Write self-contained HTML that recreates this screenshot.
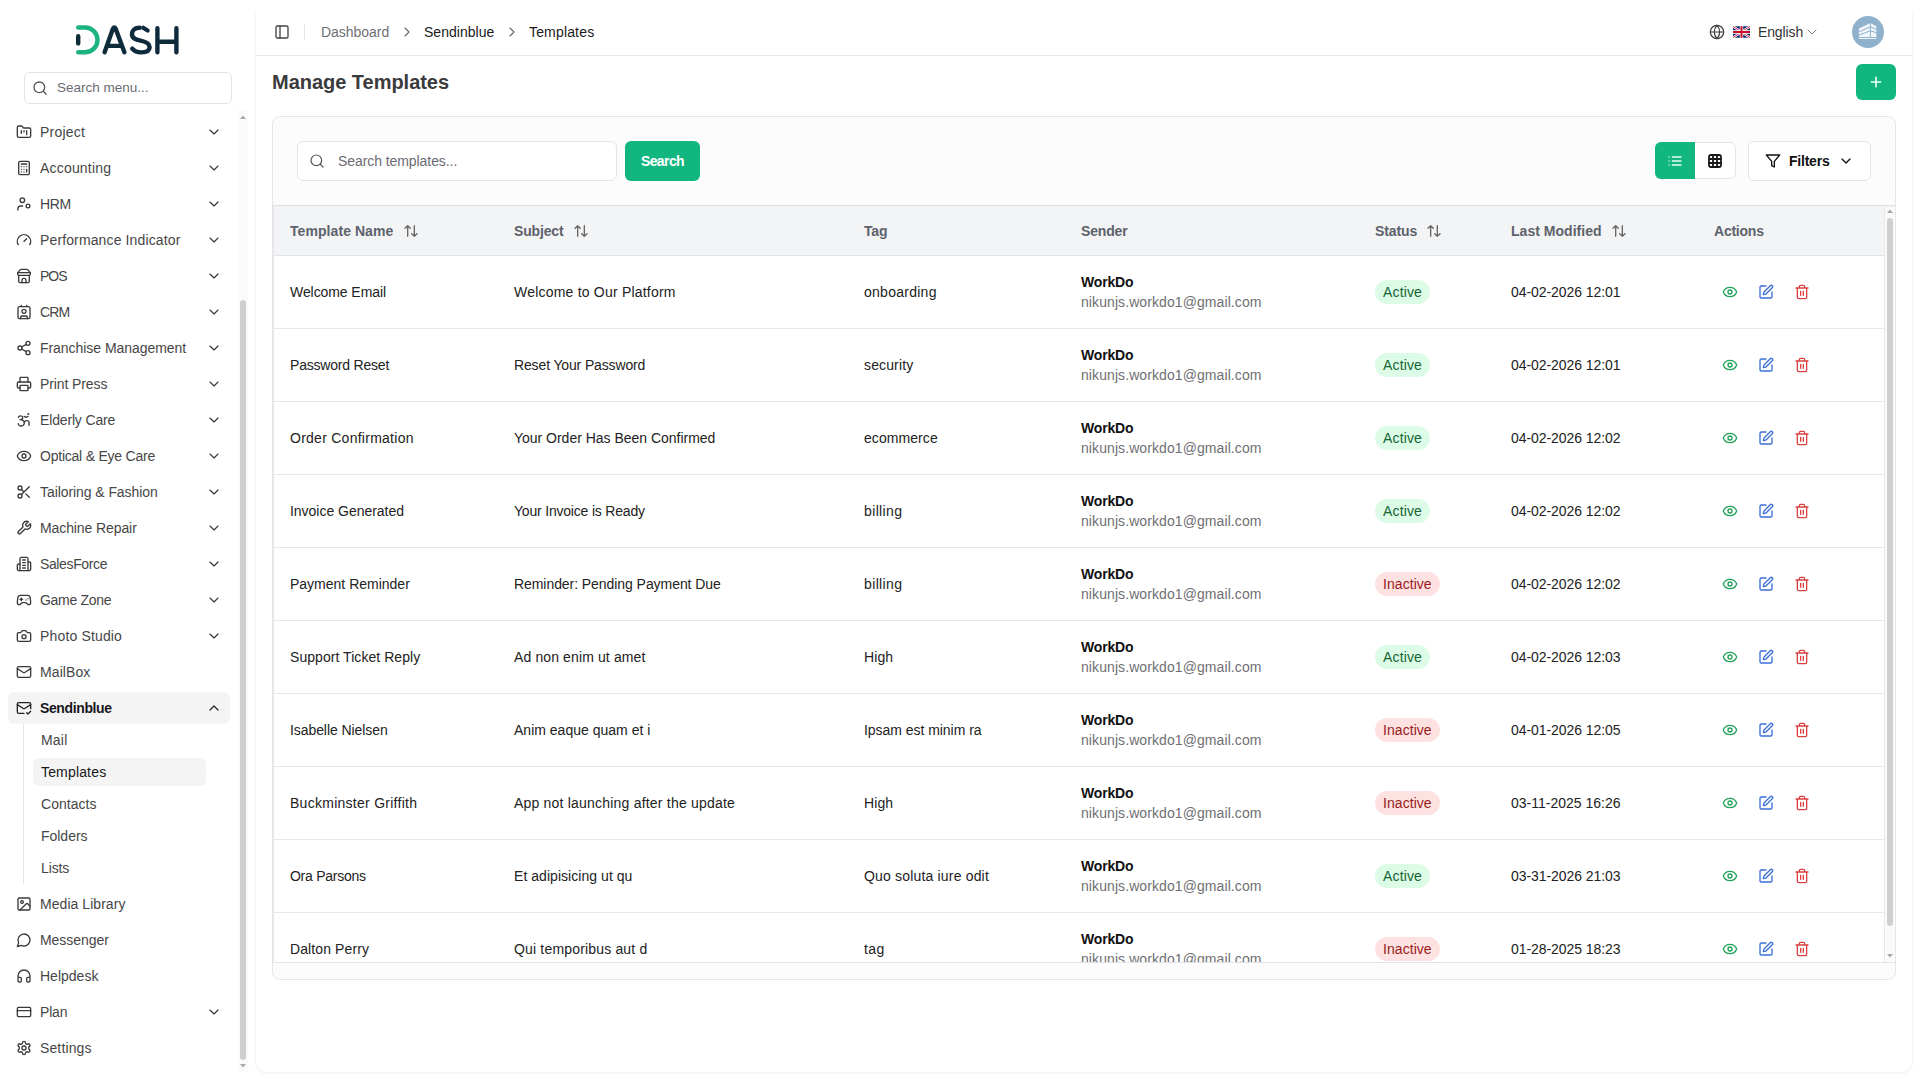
<!DOCTYPE html>
<html><head><meta charset="utf-8">
<style>
*{box-sizing:border-box;margin:0;padding:0}
html,body{width:1920px;height:1080px;overflow:hidden;background:#fff;font-family:"Liberation Sans",sans-serif;font-size:14px;color:#1f2937}
.abs{position:absolute}
svg{display:block}
.ic{position:absolute;width:16px;height:16px;fill:none;stroke:currentColor;stroke-width:2;stroke-linecap:round;stroke-linejoin:round}
/* sidebar */
#sb{position:absolute;left:0;top:0;width:255px;height:1080px;background:#fff}
.mi{position:absolute;left:8px;width:222px;height:32px;color:#464646;}
.mi .ic{left:8px;top:8px;color:#3a3a3a}
.mi .t{position:absolute;left:32px;top:6px;line-height:20px;white-space:nowrap}
.mi .ch{left:198px;top:8px;color:#333;stroke-width:1.6}
.sub{position:absolute;left:33px;width:173px;height:28px;color:#464646}
.sub .t{position:absolute;left:8px;top:4px;line-height:20px}
/* main */
#main{position:absolute;left:255px;top:13px;width:1658px;height:1060px;background:#fff;border:1px solid #f5f5f5;border-top:none;border-radius:0 0 12px 12px;box-shadow:0 1px 2px rgba(0,0,0,.04)}
.row{position:absolute;left:273px;width:1611px;height:73px;border-bottom:1px solid #e8e8ea;background:#fff}
.c{position:absolute;line-height:20px;white-space:nowrap;color:#222}
.badge{position:absolute;height:24px;border-radius:12px;line-height:24px;padding:0 8px;font-size:14px}
.act{background:#dcfce7;color:#166534}
.ina{background:#fee2e2;color:#991b1b}
.hd{position:absolute;top:221px;line-height:20px;font-weight:700;color:#5d626b;white-space:nowrap}
.srt{position:absolute;top:223px;width:16px;height:16px;fill:none;stroke:#666;stroke-width:2;stroke-linecap:round;stroke-linejoin:round}
</style></head><body>

<!-- SIDEBAR -->
<div id="sb">
  <svg class="abs" style="left:70px;top:20px" width="115" height="40" viewBox="70 20 115 40">
    <path d="M78.2 27.5 H85.1 A12.4 12.4 0 0 1 85.1 52.3 H78.2" fill="none" stroke="#1cb37e" stroke-width="4.4" stroke-linecap="round"></path>
    <path d="M78.2 36.2 V43.4" fill="none" stroke="#0e2b3c" stroke-width="4.4" stroke-linecap="round"></path>
    <path d="M104.6 52.3 L113 28.6 Q114.3 26.5 115.6 28.6 L124.4 52.3 M108.6 45.9 H120.4" fill="none" stroke="#0e2b3c" stroke-width="4.4" stroke-linecap="round" stroke-linejoin="round"></path>
    <path d="M143.2 27.8 L147.6 30.6" fill="none" stroke="#0e2b3c" stroke-width="4.2" stroke-linecap="round"></path>
    <path d="M139.6 27.8 C134.6 27.8 132 30.6 132 34.2 C132 38.4 135.6 39.6 140.6 40.6 C146 41.7 149.6 43.2 149.6 47.3 C149.6 50.8 146.4 52.4 141.2 52.4 C137.2 52.4 134.2 51 132.2 48.6" fill="none" stroke="#0e2b3c" stroke-width="4.4" stroke-linecap="round"></path>
    <path d="M157.4 28.2 V52.3 M176.4 28.2 V52.3 M157.4 41.8 H176.4" fill="none" stroke="#0e2b3c" stroke-width="4.4" stroke-linecap="round"></path>
  </svg>
  <div class="abs" style="left:24px;top:72px;width:208px;height:32px;border:1px solid #e4e4e7;border-radius:6px;background:#fff"></div>
  <svg class="ic" style="left:32px;top:80px;color:#555;stroke-width:2" viewBox="0 0 24 24"><circle cx="11" cy="11" r="8"></circle><path d="m21 21-4.3-4.3"></path></svg>
  <div class="abs u14" style="left: 57px; top: 78px; line-height: 20px; font-size: 13.5px; color: rgb(107, 107, 115); letter-spacing: -0.01px;">Search menu...</div>
  <!-- scrollbar -->
  <div class="abs" style="left:238px;top:110px;width:10px;height:962px;background:#fafafa"></div>
  <div class="abs" style="left:240px;top:300px;width:6px;height:760px;background:#cfcfd2;border-radius:3px"></div>
  <svg class="abs" style="left:239px;top:114px" width="8" height="6"><path d="M1 5 L4 1.5 L7 5Z" fill="#a8a8a8"></path></svg>
  <svg class="abs" style="left:239px;top:1063px" width="8" height="6"><path d="M1 1 L4 4.5 L7 1Z" fill="#a8a8a8"></path></svg>

  <div class="mi" style="top:116px"><svg class="ic" style="" viewBox="0 0 24 24"><path d="M4 20h16a2 2 0 0 0 2-2V8a2 2 0 0 0-2-2h-7.93a2 2 0 0 1-1.66-.9l-.82-1.2A2 2 0 0 0 7.93 3H4a2 2 0 0 0-2 2v13c0 1.1.9 2 2 2Z"></path><path d="M8 10v4M12 10v2M16 10v6"></path></svg><div class="t" style="letter-spacing: 0.203px;">Project</div><svg class="ic ch" viewBox="0 0 24 24"><path d="m6 9 6 6 6-6"></path></svg></div>
<div class="mi" style="top:152px"><svg class="ic" style="" viewBox="0 0 24 24"><rect width="16" height="20" x="4" y="2" rx="2"></rect><path d="M8 6h8M16 14v4M16 10h.01M12 10h.01M8 10h.01M12 14h.01M8 14h.01M12 18h.01M8 18h.01"></path></svg><div class="t" style="letter-spacing: 0.188px;">Accounting</div><svg class="ic ch" viewBox="0 0 24 24"><path d="m6 9 6 6 6-6"></path></svg></div>
<div class="mi" style="top:188px"><svg class="ic" style="" viewBox="0 0 24 24"><circle cx="9.5" cy="6.3" r="3.4"></circle><path d="M2.8 21v-1.5a4.5 4.5 0 0 1 4.5-4.5h2.5"></path><circle cx="18" cy="15" r="2.8"></circle></svg><div class="t" style="letter-spacing: -0.406px;">HRM</div><svg class="ic ch" viewBox="0 0 24 24"><path d="m6 9 6 6 6-6"></path></svg></div>
<div class="mi" style="top:224px"><svg class="ic" style="" viewBox="0 0 24 24"><path d="m12 14 4-4"></path><path d="M3.34 19a10 10 0 1 1 17.32 0"></path></svg><div class="t" style="letter-spacing: 0.128px;">Performance Indicator</div><svg class="ic ch" viewBox="0 0 24 24"><path d="m6 9 6 6 6-6"></path></svg></div>
<div class="mi" style="top:260px"><svg class="ic" style="" viewBox="0 0 24 24"><path d="M7 2h10l4.5 5h-19z"></path><path d="M2.5 7v2.3A1.7 1.7 0 0 0 4.2 11h15.6a1.7 1.7 0 0 0 1.7-1.7V7"></path><path d="M4 11v9a2 2 0 0 0 2 2h12a2 2 0 0 0 2-2v-9"></path><path d="M9 22v-3.5a3 3 0 0 1 6 0V22"></path></svg><div class="t" style="letter-spacing: -1px;">POS</div><svg class="ic ch" viewBox="0 0 24 24"><path d="m6 9 6 6 6-6"></path></svg></div>
<div class="mi" style="top:296px"><svg class="ic" style="" viewBox="0 0 24 24"><path d="M16 2v2M8 2v2"></path><rect width="18" height="18" x="3" y="4" rx="2"></rect><circle cx="12" cy="11" r="3"></circle><path d="M7 22v-2a2 2 0 0 1 2-2h6a2 2 0 0 1 2 2v2"></path></svg><div class="t" style="letter-spacing: -0.802px;">CRM</div><svg class="ic ch" viewBox="0 0 24 24"><path d="m6 9 6 6 6-6"></path></svg></div>
<div class="mi" style="top:332px"><svg class="ic" style="" viewBox="0 0 24 24"><circle cx="18" cy="5" r="3"></circle><circle cx="6" cy="12" r="3"></circle><circle cx="18" cy="19" r="3"></circle><path d="m8.59 13.51 6.83 3.98M15.41 6.51l-6.82 3.98"></path></svg><div class="t" style="letter-spacing: -0.045px;">Franchise Management</div><svg class="ic ch" viewBox="0 0 24 24"><path d="m6 9 6 6 6-6"></path></svg></div>
<div class="mi" style="top:368px"><svg class="ic" style="" viewBox="0 0 24 24"><path d="M6 18H4a2 2 0 0 1-2-2v-5a2 2 0 0 1 2-2h16a2 2 0 0 1 2 2v5a2 2 0 0 1-2 2h-2"></path><path d="M6 9V3a1 1 0 0 1 1-1h10a1 1 0 0 1 1 1v6"></path><rect x="6" y="14" width="12" height="8" rx="1"></rect></svg><div class="t" style="letter-spacing: -0.104px;">Print Press</div><svg class="ic ch" viewBox="0 0 24 24"><path d="m6 9 6 6 6-6"></path></svg></div>
<div class="mi" style="top:404px"><svg class="ic" style="" viewBox="0 0 24 24"><path d="M3.5 8C4.5 5 10 5 10 8.5C10 11 7.5 11.5 6 11.5C10 11.5 12.5 13.5 12.5 16.5C12.5 20 9 21.5 6 20.8C4.2 20.3 3.2 19.2 3.5 17.5"></path><path d="M12.5 15.5C13.5 12.5 19.5 12 19.5 15.5V20"></path><path d="M12 6.5Q15 9.2 18 6.5"></path><circle cx="18.5" cy="3" r=".6"></circle></svg><div class="t" style="letter-spacing: -0.155px;">Elderly Care</div><svg class="ic ch" viewBox="0 0 24 24"><path d="m6 9 6 6 6-6"></path></svg></div>
<div class="mi" style="top:440px"><svg class="ic" style="" viewBox="0 0 24 24"><path d="M2.062 12.348a1 1 0 0 1 0-.696 10.75 10.75 0 0 1 19.876 0 1 1 0 0 1 0 .696 10.75 10.75 0 0 1-19.876 0"></path><circle cx="12" cy="12" r="3"></circle></svg><div class="t" style="letter-spacing: -0.225px;">Optical &amp; Eye Care</div><svg class="ic ch" viewBox="0 0 24 24"><path d="m6 9 6 6 6-6"></path></svg></div>
<div class="mi" style="top:476px"><svg class="ic" style="" viewBox="0 0 24 24"><circle cx="6" cy="6" r="3"></circle><path d="M8.12 8.12 12 12M20 4 8.12 15.88"></path><circle cx="6" cy="18" r="3"></circle><path d="M14.8 14.8 20 20"></path></svg><div class="t" style="letter-spacing: -0.072px;">Tailoring &amp; Fashion</div><svg class="ic ch" viewBox="0 0 24 24"><path d="m6 9 6 6 6-6"></path></svg></div>
<div class="mi" style="top:512px"><svg class="ic" style="" viewBox="0 0 24 24"><path d="M14.7 6.3a1 1 0 0 0 0 1.4l1.6 1.6a1 1 0 0 0 1.4 0l3.77-3.77a6 6 0 0 1-7.94 7.94l-6.91 6.91a2.12 2.12 0 0 1-3-3l6.91-6.91a6 6 0 0 1 7.94-7.94l-3.76 3.76z"></path></svg><div class="t" style="letter-spacing: -0.096px;">Machine Repair</div><svg class="ic ch" viewBox="0 0 24 24"><path d="m6 9 6 6 6-6"></path></svg></div>
<div class="mi" style="top:548px"><svg class="ic" style="" viewBox="0 0 24 24"><path d="M6 22V4a2 2 0 0 1 2-2h8a2 2 0 0 1 2 2v18Z"></path><path d="M6 12H4a2 2 0 0 0-2 2v6a2 2 0 0 0 2 2h2M18 9h2a2 2 0 0 1 2 2v9a2 2 0 0 1-2 2h-2M10 6h4M10 10h4M10 14h4M10 18h4"></path></svg><div class="t" style="letter-spacing: -0.377px;">SalesForce</div><svg class="ic ch" viewBox="0 0 24 24"><path d="m6 9 6 6 6-6"></path></svg></div>
<div class="mi" style="top:584px"><svg class="ic" style="" viewBox="0 0 24 24"><path d="M6 11h4M8 9v4M15 12h.01M18 10h.01"></path><path d="M17.32 5H6.68a4 4 0 0 0-3.978 3.59c-.006.052-.01.101-.017.152C2.604 9.416 2 14.456 2 16a3 3 0 0 0 3 3c1 0 1.5-.5 2-1l1.414-1.414A2 2 0 0 1 9.828 16h4.344a2 2 0 0 1 1.414.586L17 18c.5.5 1 1 2 1a3 3 0 0 0 3-3c0-1.545-.604-6.584-.685-7.258-.007-.05-.011-.1-.017-.151A4 4 0 0 0 17.32 5z"></path></svg><div class="t" style="letter-spacing: -0.302px;">Game Zone</div><svg class="ic ch" viewBox="0 0 24 24"><path d="m6 9 6 6 6-6"></path></svg></div>
<div class="mi" style="top:620px"><svg class="ic" style="" viewBox="0 0 24 24"><path d="M14.5 4h-5L7 7H4a2 2 0 0 0-2 2v9a2 2 0 0 0 2 2h16a2 2 0 0 0 2-2V9a2 2 0 0 0-2-2h-3l-2.5-3z"></path><circle cx="12" cy="13" r="3"></circle></svg><div class="t" style="letter-spacing: 0.156px;">Photo Studio</div><svg class="ic ch" viewBox="0 0 24 24"><path d="m6 9 6 6 6-6"></path></svg></div>
<div class="mi" style="top:656px"><svg class="ic" style="" viewBox="0 0 24 24"><rect width="20" height="16" x="2" y="4" rx="2"></rect><path d="m22 7-8.97 5.7a1.94 1.94 0 0 1-2.06 0L2 7"></path></svg><div class="t" style="letter-spacing: 0.094px;">MailBox</div></div>
<div class="mi act-mi" style="top:692px;background:#f4f4f5;border-radius:6px;color:#18181b"><svg class="ic" style="color:#222" viewBox="0 0 24 24"><path d="M22 13V6a2 2 0 0 0-2-2H4a2 2 0 0 0-2 2v12c0 1.1.9 2 2 2h8"></path><path d="m22 7-8.97 5.7a1.94 1.94 0 0 1-2.06 0L2 7"></path><path d="m16 19 2 2 4-4"></path></svg><div class="t med" style="font-weight: 700; letter-spacing: -0.38px;">Sendinblue</div><svg class="ic ch" viewBox="0 0 24 24" style="color:#222;stroke-width:1.8"><path d="m18 15-6-6-6 6"></path></svg></div>
<div class="abs" style="left:23px;top:724px;width:1px;height:160px;background:#e4e4e7"></div>
<div class="sub" style="top:726px"><div class="t" style="letter-spacing: 0.191px;">Mail</div></div>
<div class="sub" style="top:758px;background:#f4f4f5;border-radius:6px;color:#18181b"><div class="t" style="letter-spacing: 0.165px;">Templates</div></div>
<div class="sub" style="top:790px"><div class="t" style="letter-spacing: 0.033px;">Contacts</div></div>
<div class="sub" style="top:822px"><div class="t" style="letter-spacing: -0.025px;">Folders</div></div>
<div class="sub" style="top:854px"><div class="t" style="letter-spacing: -0.122px;">Lists</div></div>
<div class="mi" style="top:888px"><svg class="ic" style="" viewBox="0 0 24 24"><rect width="18" height="18" x="3" y="3" rx="2"></rect><circle cx="9" cy="9" r="2"></circle><path d="m21 15-3.086-3.086a2 2 0 0 0-2.828 0L6 21"></path></svg><div class="t" style="letter-spacing: 0.049px;">Media Library</div></div>
<div class="mi" style="top:924px"><svg class="ic" style="" viewBox="0 0 24 24"><path d="M7.9 20A9 9 0 1 0 4 16.1L2 22Z"></path></svg><div class="t" style="letter-spacing: -0.045px;">Messenger</div></div>
<div class="mi" style="top:960px"><svg class="ic" style="" viewBox="0 0 24 24"><path d="M3 14h3a2 2 0 0 1 2 2v3a2 2 0 0 1-2 2H5a2 2 0 0 1-2-2v-7a9 9 0 0 1 18 0v7a2 2 0 0 1-2 2h-1a2 2 0 0 1-2-2v-3a2 2 0 0 1 2-2h3"></path></svg><div class="t" style="letter-spacing: 0.006px;">Helpdesk</div></div>
<div class="mi" style="top:996px"><svg class="ic" style="" viewBox="0 0 24 24"><rect width="20" height="14" x="2" y="5" rx="2"></rect><path d="M2 10h20"></path></svg><div class="t" style="letter-spacing: -0.191px;">Plan</div><svg class="ic ch" viewBox="0 0 24 24"><path d="m6 9 6 6 6-6"></path></svg></div>
<div class="mi" style="top:1032px"><svg class="ic" style="" viewBox="0 0 24 24"><path d="M12.22 2h-.44a2 2 0 0 0-2 2v.18a2 2 0 0 1-1 1.73l-.43.25a2 2 0 0 1-2 0l-.15-.08a2 2 0 0 0-2.73.73l-.22.38a2 2 0 0 0 .73 2.73l.15.1a2 2 0 0 1 1 1.72v.51a2 2 0 0 1-1 1.74l-.15.09a2 2 0 0 0-.73 2.73l.22.38a2 2 0 0 0 2.73.73l.15-.08a2 2 0 0 1 2 0l.43.25a2 2 0 0 1 1 1.73V20a2 2 0 0 0 2 2h.44a2 2 0 0 0 2-2v-.18a2 2 0 0 1 1-1.73l.43-.25a2 2 0 0 1 2 0l.15.08a2 2 0 0 0 2.73-.73l.22-.39a2 2 0 0 0-.73-2.73l-.15-.08a2 2 0 0 1-1-1.74v-.5a2 2 0 0 1 1-1.74l.15-.09a2 2 0 0 0 .73-2.73l-.22-.38a2 2 0 0 0-2.73-.73l-.15.08a2 2 0 0 1-2 0l-.43-.25a2 2 0 0 1-1-1.73V4a2 2 0 0 0-2-2z"></path><circle cx="12" cy="12" r="3"></circle></svg><div class="t" style="letter-spacing: 0.125px;">Settings</div></div>
</div>

<!-- MAIN PANEL -->
<div id="main"></div>
<div class="abs" style="left:256px;top:55px;width:1656px;height:1px;background:#e6e6e6"></div>

<!-- header -->
<svg class="ic" style="left:274px;top:24px;color:#444" viewBox="0 0 24 24"><rect width="18" height="18" x="3" y="3" rx="2"></rect><path d="M9 3v18"></path></svg>
<div class="abs" style="left:304px;top:24px;width:1px;height:16px;background:#e2e2e2"></div>
<div class="abs" style="left: 321px; top: 22px; line-height: 20px; color: rgb(112, 112, 117); letter-spacing: -0.031px;">Dashboard</div>
<svg class="ic" style="left:399px;top:24px;color:#666;stroke-width:1.6" viewBox="0 0 24 24"><path d="m9 18 6-6-6-6"></path></svg>
<div class="abs" style="left: 424px; top: 22px; line-height: 20px; color: rgb(26, 26, 26); letter-spacing: 0.017px;">Sendinblue</div>
<svg class="ic" style="left:504px;top:24px;color:#666;stroke-width:1.6" viewBox="0 0 24 24"><path d="m9 18 6-6-6-6"></path></svg>
<div class="abs" style="left: 529px; top: 22px; line-height: 20px; color: rgb(26, 26, 26); letter-spacing: 0.165px;">Templates</div>

<svg class="ic" style="left:1709px;top:24px;color:#3a3a3a;stroke-width:1.8" viewBox="0 0 24 24"><circle cx="12" cy="12" r="10"></circle><path d="M12 2a14.5 14.5 0 0 0 0 20 14.5 14.5 0 0 0 0-20"></path><path d="M2 12h20"></path></svg>
<svg class="abs" style="left:1733px;top:26px" width="17" height="12" viewBox="0 0 60 40">
  <rect width="60" height="40" fill="#012169"></rect>
  <path d="M0 0L60 40M60 0L0 40" stroke="#fff" stroke-width="8"></path>
  <path d="M0 0L60 40M60 0L0 40" stroke="#C8102E" stroke-width="3"></path>
  <path d="M30 0V40M0 20H60" stroke="#fff" stroke-width="12"></path>
  <path d="M30 0V40M0 20H60" stroke="#C8102E" stroke-width="7"></path>
</svg>
<div class="abs" style="left: 1758px; top: 22px; line-height: 20px; color: rgb(51, 51, 51); letter-spacing: -0.125px;">English</div>
<svg class="ic" style="left:1804px;top:24px;color:#888;stroke-width:1.5" viewBox="0 0 24 24"><path d="m6 9 6 6 6-6"></path></svg>
<div class="abs" style="left:1852px;top:16px;width:32px;height:32px;border-radius:50%;background:#8fb1cc;overflow:hidden">
  <svg width="32" height="32" viewBox="0 0 32 32"><path d="M6.9 12.5 L18.4 7 L24.3 10.3 V22.9 H6.9Z" fill="#f2f6fa"></path><path d="M6.9 15.8 L18.4 10.8 L24.3 13.4 M6.9 19 L18.4 14.8 L24.3 16.6 M6.9 21.6 H24.3 M18.4 7 V21.6" stroke="#8fb1cc" stroke-width="1" fill="none"></path></svg>
</div>

<!-- title -->
<div class="abs" style="left: 272px; top: 70px; line-height: 24px; font-size: 20px; font-weight: 700; color: rgb(59, 59, 61); letter-spacing: -0.025px;">Manage Templates</div>
<div class="abs" style="left:1856px;top:64px;width:40px;height:36px;background:#12b77f;border-radius:6px"></div>
<svg class="ic" style="left:1868px;top:74px;color:#f0fff8;stroke-width:2.4" viewBox="0 0 24 24"><path d="M5 12h14"></path><path d="M12 5v14"></path></svg>

<!-- table container -->
<div class="abs" style="left:272px;top:116px;width:1624px;height:864px;border:1px solid #e6e6e8;border-radius:8px;background:#fcfcfc"></div>
<div class="abs" style="left:297px;top:141px;width:320px;height:40px;border:1px solid #e4e4e7;border-radius:6px;background:#fff"></div>
<svg class="ic" style="left:309px;top:153px;color:#555;stroke-width:1.8" viewBox="0 0 24 24"><circle cx="11" cy="11" r="8"></circle><path d="m21 21-4.3-4.3"></path></svg>
<div class="abs" style="left: 338px; top: 151px; line-height: 20px; color: rgb(107, 107, 115); letter-spacing: -0.072px;">Search templates...</div>
<div class="abs med" style="left: 625px; top: 141px; width: 75px; height: 40px; background: rgb(18, 183, 127); border-radius: 6px; color: rgb(255, 255, 255); font-weight: 700; text-align: center; line-height: 40px; letter-spacing: -0.609px;">Search</div>

<div class="abs" style="left:1655px;top:142px;width:81px;height:37px;border:1px solid #e4e4e7;border-radius:6px;background:#fff"></div>
<div class="abs" style="left:1655px;top:142px;width:40px;height:37px;background:#12b77f;border-radius:6px 0 0 6px"></div>
<svg class="ic" style="left:1667px;top:153px;color:#e6fff4;stroke-width:2" viewBox="0 0 24 24"><path d="M3 6h.01M3 12h.01M3 18h.01M8 6h13M8 12h13M8 18h13"></path></svg>
<svg class="ic" style="left:1707px;top:153px;color:#1a1a1a;stroke-width:2.7" viewBox="0 0 24 24"><rect width="18" height="18" x="3" y="3" rx="3"></rect><path d="M3 9h18M3 15h18M9 3v18M15 3v18"></path></svg>

<div class="abs" style="left:1748px;top:141px;width:123px;height:40px;border:1px solid #e4e4e7;border-radius:6px;background:#fff"></div>
<svg class="ic" style="left:1765px;top:153px;color:#111;stroke-width:2" viewBox="0 0 24 24"><path d="M22 3H2l8 9.46V19l4 2v-8.54L22 3z"></path></svg>
<div class="abs med" style="left: 1789px; top: 151px; line-height: 20px; font-weight: 700; color: rgb(17, 17, 17); letter-spacing: -0.225px;">Filters</div>
<svg class="ic" style="left:1838px;top:153px;color:#111;stroke-width:2" viewBox="0 0 24 24"><path d="m6 9 6 6 6-6"></path></svg>

<!-- table -->
<div class="abs" style="left:273px;top:205px;width:1622px;height:1px;background:#e1e1e3"></div><div class="abs" style="left:273px;top:206px;width:1622px;height:1px;background:#f0f0f1"></div>
<div id="tbl" class="abs" style="left:0;top:0;width:1920px;height:962px;overflow:hidden">
  <div class="abs" style="left:273px;top:207px;width:1611px;height:49px;background:#f3f4f6;border-bottom:1px solid #e3e4e7"></div>
  <div class="hd" style="left: 290px; letter-spacing: 0.07px;">Template Name</div>
<svg class="srt" style="left:403px" viewBox="0 0 24 24"><path d="m21 16-4 4-4-4M17 20V4M3 8l4-4 4 4M7 4v16"></path></svg>
<div class="hd" style="left: 514px; letter-spacing: -0.167px;">Subject</div>
<svg class="srt" style="left:573px" viewBox="0 0 24 24"><path d="m21 16-4 4-4-4M17 20V4M3 8l4-4 4 4M7 4v16"></path></svg>
<div class="hd" style="left: 864px; letter-spacing: -0.177px;">Tag</div>
<div class="hd" style="left: 1081px; letter-spacing: -0.174px;">Sender</div>
<div class="hd" style="left: 1375px; letter-spacing: -0.099px;">Status</div>
<svg class="srt" style="left:1426px" viewBox="0 0 24 24"><path d="m21 16-4 4-4-4M17 20V4M3 8l4-4 4 4M7 4v16"></path></svg>
<div class="hd" style="left: 1511px; letter-spacing: 0.031px;">Last Modified</div>
<svg class="srt" style="left:1611px" viewBox="0 0 24 24"><path d="m21 16-4 4-4-4M17 20V4M3 8l4-4 4 4M7 4v16"></path></svg>
<div class="hd" style="left: 1714px; letter-spacing: -0.228px;">Actions</div>
<div class="row" style="top:256px"></div><div class="c" style="left: 290px; top: 282px; letter-spacing: -0.076px;">Welcome Email</div><div class="c" style="left: 514px; top: 282px; letter-spacing: 0.209px;">Welcome to Our Platform</div><div class="c" style="left: 864px; top: 282px; letter-spacing: 0.264px;">onboarding</div><div class="c med" style="left: 1081px; top: 272px; font-weight: 700; color: rgb(17, 17, 17); letter-spacing: -0.19px;">WorkDo</div><div class="c" style="left: 1081px; top: 292px; color: rgb(111, 111, 115); letter-spacing: 0.086px;">nikunjs.workdo1@gmail.com</div><div class="badge act" style="left: 1375px; top: 280px; letter-spacing: 0.148px;">Active</div><div class="c" style="left: 1511px; top: 282px; letter-spacing: -0.065px;">04-02-2026 12:01</div><svg class="ic" style="left:1722px;top:284px;color:#22a05a;stroke-width:2" viewBox="0 0 24 24"><path d="M2.062 12.348a1 1 0 0 1 0-.696 10.75 10.75 0 0 1 19.876 0 1 1 0 0 1 0 .696 10.75 10.75 0 0 1-19.876 0"></path><circle cx="12" cy="12" r="3"></circle></svg><svg class="ic" style="left:1758px;top:284px;color:#3a6fd8;stroke-width:2" viewBox="0 0 24 24"><path d="M12 3H5a2 2 0 0 0-2 2v14a2 2 0 0 0 2 2h14a2 2 0 0 0 2-2v-7"></path><path d="M18.375 2.625a1 1 0 0 1 3 3l-9.013 9.014a2 2 0 0 1-.853.505l-2.873.84a.5.5 0 0 1-.62-.62l.84-2.873a2 2 0 0 1 .506-.852z"></path></svg><svg class="ic" style="left:1794px;top:284px;color:#dc4040;stroke-width:2" viewBox="0 0 24 24"><path d="M3 6h18M19 6v14c0 1-1 2-2 2H7c-1 0-2-1-2-2V6M8 6V4c0-1 1-2 2-2h4c1 0 2 1 2 2v2M10 11v6M14 11v6"></path></svg>
<div class="row" style="top:329px"></div><div class="c" style="left: 290px; top: 355px; letter-spacing: -0.205px;">Password Reset</div><div class="c" style="left: 514px; top: 355px; letter-spacing: -0.137px;">Reset Your Password</div><div class="c" style="left: 864px; top: 355px; letter-spacing: 0.131px;">security</div><div class="c med" style="left: 1081px; top: 345px; font-weight: 700; color: rgb(17, 17, 17); letter-spacing: -0.19px;">WorkDo</div><div class="c" style="left: 1081px; top: 365px; color: rgb(111, 111, 115); letter-spacing: 0.086px;">nikunjs.workdo1@gmail.com</div><div class="badge act" style="left: 1375px; top: 353px; letter-spacing: 0.148px;">Active</div><div class="c" style="left: 1511px; top: 355px; letter-spacing: -0.065px;">04-02-2026 12:01</div><svg class="ic" style="left:1722px;top:357px;color:#22a05a;stroke-width:2" viewBox="0 0 24 24"><path d="M2.062 12.348a1 1 0 0 1 0-.696 10.75 10.75 0 0 1 19.876 0 1 1 0 0 1 0 .696 10.75 10.75 0 0 1-19.876 0"></path><circle cx="12" cy="12" r="3"></circle></svg><svg class="ic" style="left:1758px;top:357px;color:#3a6fd8;stroke-width:2" viewBox="0 0 24 24"><path d="M12 3H5a2 2 0 0 0-2 2v14a2 2 0 0 0 2 2h14a2 2 0 0 0 2-2v-7"></path><path d="M18.375 2.625a1 1 0 0 1 3 3l-9.013 9.014a2 2 0 0 1-.853.505l-2.873.84a.5.5 0 0 1-.62-.62l.84-2.873a2 2 0 0 1 .506-.852z"></path></svg><svg class="ic" style="left:1794px;top:357px;color:#dc4040;stroke-width:2" viewBox="0 0 24 24"><path d="M3 6h18M19 6v14c0 1-1 2-2 2H7c-1 0-2-1-2-2V6M8 6V4c0-1 1-2 2-2h4c1 0 2 1 2 2v2M10 11v6M14 11v6"></path></svg>
<div class="row" style="top:402px"></div><div class="c" style="left: 290px; top: 428px; letter-spacing: 0.261px;">Order Confirmation</div><div class="c" style="left: 514px; top: 428px; letter-spacing: -0.016px;">Your Order Has Been Confirmed</div><div class="c" style="left: 864px; top: 428px; letter-spacing: 0.071px;">ecommerce</div><div class="c med" style="left: 1081px; top: 418px; font-weight: 700; color: rgb(17, 17, 17); letter-spacing: -0.19px;">WorkDo</div><div class="c" style="left: 1081px; top: 438px; color: rgb(111, 111, 115); letter-spacing: 0.086px;">nikunjs.workdo1@gmail.com</div><div class="badge act" style="left: 1375px; top: 426px; letter-spacing: 0.148px;">Active</div><div class="c" style="left: 1511px; top: 428px; letter-spacing: -0.065px;">04-02-2026 12:02</div><svg class="ic" style="left:1722px;top:430px;color:#22a05a;stroke-width:2" viewBox="0 0 24 24"><path d="M2.062 12.348a1 1 0 0 1 0-.696 10.75 10.75 0 0 1 19.876 0 1 1 0 0 1 0 .696 10.75 10.75 0 0 1-19.876 0"></path><circle cx="12" cy="12" r="3"></circle></svg><svg class="ic" style="left:1758px;top:430px;color:#3a6fd8;stroke-width:2" viewBox="0 0 24 24"><path d="M12 3H5a2 2 0 0 0-2 2v14a2 2 0 0 0 2 2h14a2 2 0 0 0 2-2v-7"></path><path d="M18.375 2.625a1 1 0 0 1 3 3l-9.013 9.014a2 2 0 0 1-.853.505l-2.873.84a.5.5 0 0 1-.62-.62l.84-2.873a2 2 0 0 1 .506-.852z"></path></svg><svg class="ic" style="left:1794px;top:430px;color:#dc4040;stroke-width:2" viewBox="0 0 24 24"><path d="M3 6h18M19 6v14c0 1-1 2-2 2H7c-1 0-2-1-2-2V6M8 6V4c0-1 1-2 2-2h4c1 0 2 1 2 2v2M10 11v6M14 11v6"></path></svg>
<div class="row" style="top:475px"></div><div class="c" style="left: 290px; top: 501px; letter-spacing: -0.026px;">Invoice Generated</div><div class="c" style="left: 514px; top: 501px; letter-spacing: -0.196px;">Your Invoice is Ready</div><div class="c" style="left: 864px; top: 501px; letter-spacing: 0.366px;">billing</div><div class="c med" style="left: 1081px; top: 491px; font-weight: 700; color: rgb(17, 17, 17); letter-spacing: -0.19px;">WorkDo</div><div class="c" style="left: 1081px; top: 511px; color: rgb(111, 111, 115); letter-spacing: 0.086px;">nikunjs.workdo1@gmail.com</div><div class="badge act" style="left: 1375px; top: 499px; letter-spacing: 0.148px;">Active</div><div class="c" style="left: 1511px; top: 501px; letter-spacing: -0.065px;">04-02-2026 12:02</div><svg class="ic" style="left:1722px;top:503px;color:#22a05a;stroke-width:2" viewBox="0 0 24 24"><path d="M2.062 12.348a1 1 0 0 1 0-.696 10.75 10.75 0 0 1 19.876 0 1 1 0 0 1 0 .696 10.75 10.75 0 0 1-19.876 0"></path><circle cx="12" cy="12" r="3"></circle></svg><svg class="ic" style="left:1758px;top:503px;color:#3a6fd8;stroke-width:2" viewBox="0 0 24 24"><path d="M12 3H5a2 2 0 0 0-2 2v14a2 2 0 0 0 2 2h14a2 2 0 0 0 2-2v-7"></path><path d="M18.375 2.625a1 1 0 0 1 3 3l-9.013 9.014a2 2 0 0 1-.853.505l-2.873.84a.5.5 0 0 1-.62-.62l.84-2.873a2 2 0 0 1 .506-.852z"></path></svg><svg class="ic" style="left:1794px;top:503px;color:#dc4040;stroke-width:2" viewBox="0 0 24 24"><path d="M3 6h18M19 6v14c0 1-1 2-2 2H7c-1 0-2-1-2-2V6M8 6V4c0-1 1-2 2-2h4c1 0 2 1 2 2v2M10 11v6M14 11v6"></path></svg>
<div class="row" style="top:548px"></div><div class="c" style="left: 290px; top: 574px; letter-spacing: -0.001px;">Payment Reminder</div><div class="c" style="left: 514px; top: 574px; letter-spacing: -0.062px;">Reminder: Pending Payment Due</div><div class="c" style="left: 864px; top: 574px; letter-spacing: 0.366px;">billing</div><div class="c med" style="left: 1081px; top: 564px; font-weight: 700; color: rgb(17, 17, 17); letter-spacing: -0.19px;">WorkDo</div><div class="c" style="left: 1081px; top: 584px; color: rgb(111, 111, 115); letter-spacing: 0.086px;">nikunjs.workdo1@gmail.com</div><div class="badge ina" style="left: 1375px; top: 572px; letter-spacing: 0.057px;">Inactive</div><div class="c" style="left: 1511px; top: 574px; letter-spacing: -0.065px;">04-02-2026 12:02</div><svg class="ic" style="left:1722px;top:576px;color:#22a05a;stroke-width:2" viewBox="0 0 24 24"><path d="M2.062 12.348a1 1 0 0 1 0-.696 10.75 10.75 0 0 1 19.876 0 1 1 0 0 1 0 .696 10.75 10.75 0 0 1-19.876 0"></path><circle cx="12" cy="12" r="3"></circle></svg><svg class="ic" style="left:1758px;top:576px;color:#3a6fd8;stroke-width:2" viewBox="0 0 24 24"><path d="M12 3H5a2 2 0 0 0-2 2v14a2 2 0 0 0 2 2h14a2 2 0 0 0 2-2v-7"></path><path d="M18.375 2.625a1 1 0 0 1 3 3l-9.013 9.014a2 2 0 0 1-.853.505l-2.873.84a.5.5 0 0 1-.62-.62l.84-2.873a2 2 0 0 1 .506-.852z"></path></svg><svg class="ic" style="left:1794px;top:576px;color:#dc4040;stroke-width:2" viewBox="0 0 24 24"><path d="M3 6h18M19 6v14c0 1-1 2-2 2H7c-1 0-2-1-2-2V6M8 6V4c0-1 1-2 2-2h4c1 0 2 1 2 2v2M10 11v6M14 11v6"></path></svg>
<div class="row" style="top:621px"></div><div class="c" style="left: 290px; top: 647px; letter-spacing: 0.052px;">Support Ticket Reply</div><div class="c" style="left: 514px; top: 647px; letter-spacing: 0.122px;">Ad non enim ut amet</div><div class="c" style="left: 864px; top: 647px; letter-spacing: 0.105px;">High</div><div class="c med" style="left: 1081px; top: 637px; font-weight: 700; color: rgb(17, 17, 17); letter-spacing: -0.19px;">WorkDo</div><div class="c" style="left: 1081px; top: 657px; color: rgb(111, 111, 115); letter-spacing: 0.086px;">nikunjs.workdo1@gmail.com</div><div class="badge act" style="left: 1375px; top: 645px; letter-spacing: 0.148px;">Active</div><div class="c" style="left: 1511px; top: 647px; letter-spacing: -0.065px;">04-02-2026 12:03</div><svg class="ic" style="left:1722px;top:649px;color:#22a05a;stroke-width:2" viewBox="0 0 24 24"><path d="M2.062 12.348a1 1 0 0 1 0-.696 10.75 10.75 0 0 1 19.876 0 1 1 0 0 1 0 .696 10.75 10.75 0 0 1-19.876 0"></path><circle cx="12" cy="12" r="3"></circle></svg><svg class="ic" style="left:1758px;top:649px;color:#3a6fd8;stroke-width:2" viewBox="0 0 24 24"><path d="M12 3H5a2 2 0 0 0-2 2v14a2 2 0 0 0 2 2h14a2 2 0 0 0 2-2v-7"></path><path d="M18.375 2.625a1 1 0 0 1 3 3l-9.013 9.014a2 2 0 0 1-.853.505l-2.873.84a.5.5 0 0 1-.62-.62l.84-2.873a2 2 0 0 1 .506-.852z"></path></svg><svg class="ic" style="left:1794px;top:649px;color:#dc4040;stroke-width:2" viewBox="0 0 24 24"><path d="M3 6h18M19 6v14c0 1-1 2-2 2H7c-1 0-2-1-2-2V6M8 6V4c0-1 1-2 2-2h4c1 0 2 1 2 2v2M10 11v6M14 11v6"></path></svg>
<div class="row" style="top:694px"></div><div class="c" style="left: 290px; top: 720px; letter-spacing: -0.075px;">Isabelle Nielsen</div><div class="c" style="left: 514px; top: 720px; letter-spacing: 0.007px;">Anim eaque quam et i</div><div class="c" style="left: 864px; top: 720px; letter-spacing: -0.041px;">Ipsam est minim ra</div><div class="c med" style="left: 1081px; top: 710px; font-weight: 700; color: rgb(17, 17, 17); letter-spacing: -0.19px;">WorkDo</div><div class="c" style="left: 1081px; top: 730px; color: rgb(111, 111, 115); letter-spacing: 0.086px;">nikunjs.workdo1@gmail.com</div><div class="badge ina" style="left: 1375px; top: 718px; letter-spacing: 0.057px;">Inactive</div><div class="c" style="left: 1511px; top: 720px; letter-spacing: -0.065px;">04-01-2026 12:05</div><svg class="ic" style="left:1722px;top:722px;color:#22a05a;stroke-width:2" viewBox="0 0 24 24"><path d="M2.062 12.348a1 1 0 0 1 0-.696 10.75 10.75 0 0 1 19.876 0 1 1 0 0 1 0 .696 10.75 10.75 0 0 1-19.876 0"></path><circle cx="12" cy="12" r="3"></circle></svg><svg class="ic" style="left:1758px;top:722px;color:#3a6fd8;stroke-width:2" viewBox="0 0 24 24"><path d="M12 3H5a2 2 0 0 0-2 2v14a2 2 0 0 0 2 2h14a2 2 0 0 0 2-2v-7"></path><path d="M18.375 2.625a1 1 0 0 1 3 3l-9.013 9.014a2 2 0 0 1-.853.505l-2.873.84a.5.5 0 0 1-.62-.62l.84-2.873a2 2 0 0 1 .506-.852z"></path></svg><svg class="ic" style="left:1794px;top:722px;color:#dc4040;stroke-width:2" viewBox="0 0 24 24"><path d="M3 6h18M19 6v14c0 1-1 2-2 2H7c-1 0-2-1-2-2V6M8 6V4c0-1 1-2 2-2h4c1 0 2 1 2 2v2M10 11v6M14 11v6"></path></svg>
<div class="row" style="top:767px"></div><div class="c" style="left: 290px; top: 793px; letter-spacing: 0.27px;">Buckminster Griffith</div><div class="c" style="left: 514px; top: 793px; letter-spacing: 0.206px;">App not launching after the update</div><div class="c" style="left: 864px; top: 793px; letter-spacing: 0.105px;">High</div><div class="c med" style="left: 1081px; top: 783px; font-weight: 700; color: rgb(17, 17, 17); letter-spacing: -0.19px;">WorkDo</div><div class="c" style="left: 1081px; top: 803px; color: rgb(111, 111, 115); letter-spacing: 0.086px;">nikunjs.workdo1@gmail.com</div><div class="badge ina" style="left: 1375px; top: 791px; letter-spacing: 0.057px;">Inactive</div><div class="c" style="left: 1511px; top: 793px; letter-spacing: 0px;">03-11-2025 16:26</div><svg class="ic" style="left:1722px;top:795px;color:#22a05a;stroke-width:2" viewBox="0 0 24 24"><path d="M2.062 12.348a1 1 0 0 1 0-.696 10.75 10.75 0 0 1 19.876 0 1 1 0 0 1 0 .696 10.75 10.75 0 0 1-19.876 0"></path><circle cx="12" cy="12" r="3"></circle></svg><svg class="ic" style="left:1758px;top:795px;color:#3a6fd8;stroke-width:2" viewBox="0 0 24 24"><path d="M12 3H5a2 2 0 0 0-2 2v14a2 2 0 0 0 2 2h14a2 2 0 0 0 2-2v-7"></path><path d="M18.375 2.625a1 1 0 0 1 3 3l-9.013 9.014a2 2 0 0 1-.853.505l-2.873.84a.5.5 0 0 1-.62-.62l.84-2.873a2 2 0 0 1 .506-.852z"></path></svg><svg class="ic" style="left:1794px;top:795px;color:#dc4040;stroke-width:2" viewBox="0 0 24 24"><path d="M3 6h18M19 6v14c0 1-1 2-2 2H7c-1 0-2-1-2-2V6M8 6V4c0-1 1-2 2-2h4c1 0 2 1 2 2v2M10 11v6M14 11v6"></path></svg>
<div class="row" style="top:840px"></div><div class="c" style="left: 290px; top: 866px; letter-spacing: -0.267px;">Ora Parsons</div><div class="c" style="left: 514px; top: 866px; letter-spacing: 0.047px;">Et adipisicing ut qu</div><div class="c" style="left: 864px; top: 866px; letter-spacing: 0.178px;">Quo soluta iure odit</div><div class="c med" style="left: 1081px; top: 856px; font-weight: 700; color: rgb(17, 17, 17); letter-spacing: -0.19px;">WorkDo</div><div class="c" style="left: 1081px; top: 876px; color: rgb(111, 111, 115); letter-spacing: 0.086px;">nikunjs.workdo1@gmail.com</div><div class="badge act" style="left: 1375px; top: 864px; letter-spacing: 0.148px;">Active</div><div class="c" style="left: 1511px; top: 866px; letter-spacing: -0.065px;">03-31-2026 21:03</div><svg class="ic" style="left:1722px;top:868px;color:#22a05a;stroke-width:2" viewBox="0 0 24 24"><path d="M2.062 12.348a1 1 0 0 1 0-.696 10.75 10.75 0 0 1 19.876 0 1 1 0 0 1 0 .696 10.75 10.75 0 0 1-19.876 0"></path><circle cx="12" cy="12" r="3"></circle></svg><svg class="ic" style="left:1758px;top:868px;color:#3a6fd8;stroke-width:2" viewBox="0 0 24 24"><path d="M12 3H5a2 2 0 0 0-2 2v14a2 2 0 0 0 2 2h14a2 2 0 0 0 2-2v-7"></path><path d="M18.375 2.625a1 1 0 0 1 3 3l-9.013 9.014a2 2 0 0 1-.853.505l-2.873.84a.5.5 0 0 1-.62-.62l.84-2.873a2 2 0 0 1 .506-.852z"></path></svg><svg class="ic" style="left:1794px;top:868px;color:#dc4040;stroke-width:2" viewBox="0 0 24 24"><path d="M3 6h18M19 6v14c0 1-1 2-2 2H7c-1 0-2-1-2-2V6M8 6V4c0-1 1-2 2-2h4c1 0 2 1 2 2v2M10 11v6M14 11v6"></path></svg>
<div class="row" style="top:913px"></div><div class="c" style="left: 290px; top: 939px; letter-spacing: 0.108px;">Dalton Perry</div><div class="c" style="left: 514px; top: 939px; letter-spacing: 0.172px;">Qui temporibus aut d</div><div class="c" style="left: 864px; top: 939px; letter-spacing: 0.422px;">tag</div><div class="c med" style="left: 1081px; top: 929px; font-weight: 700; color: rgb(17, 17, 17); letter-spacing: -0.19px;">WorkDo</div><div class="c" style="left: 1081px; top: 949px; color: rgb(111, 111, 115); letter-spacing: 0.086px;">nikunjs.workdo1@gmail.com</div><div class="badge ina" style="left: 1375px; top: 937px; letter-spacing: 0.057px;">Inactive</div><div class="c" style="left: 1511px; top: 939px; letter-spacing: -0.065px;">01-28-2025 18:23</div><svg class="ic" style="left:1722px;top:941px;color:#22a05a;stroke-width:2" viewBox="0 0 24 24"><path d="M2.062 12.348a1 1 0 0 1 0-.696 10.75 10.75 0 0 1 19.876 0 1 1 0 0 1 0 .696 10.75 10.75 0 0 1-19.876 0"></path><circle cx="12" cy="12" r="3"></circle></svg><svg class="ic" style="left:1758px;top:941px;color:#3a6fd8;stroke-width:2" viewBox="0 0 24 24"><path d="M12 3H5a2 2 0 0 0-2 2v14a2 2 0 0 0 2 2h14a2 2 0 0 0 2-2v-7"></path><path d="M18.375 2.625a1 1 0 0 1 3 3l-9.013 9.014a2 2 0 0 1-.853.505l-2.873.84a.5.5 0 0 1-.62-.62l.84-2.873a2 2 0 0 1 .506-.852z"></path></svg><svg class="ic" style="left:1794px;top:941px;color:#dc4040;stroke-width:2" viewBox="0 0 24 24"><path d="M3 6h18M19 6v14c0 1-1 2-2 2H7c-1 0-2-1-2-2V6M8 6V4c0-1 1-2 2-2h4c1 0 2 1 2 2v2M10 11v6M14 11v6"></path></svg>
</div>
<div class="abs" style="left:273px;top:962px;width:1622px;height:1px;background:#e3e3e5"></div>
<div class="abs" style="left:1884px;top:207px;width:1px;height:756px;background:#e8e8ea"></div><div class="abs" style="left:273px;top:206px;width:1px;height:757px;background:#e6e6e8"></div>
<div class="abs" style="left:1885px;top:207px;width:10px;height:755px;background:#fafafa"></div>
<div class="abs" style="left:1887px;top:218px;width:6px;height:708px;background:#cfcfd2;border-radius:3px"></div>
<svg class="abs" style="left:1886px;top:208px" width="8" height="6"><path d="M1 5 L4 1.5 L7 5Z" fill="#a8a8a8"></path></svg>
<svg class="abs" style="left:1886px;top:953px" width="8" height="6"><path d="M1 1 L4 4.5 L7 1Z" fill="#a8a8a8"></path></svg>


</body></html>
